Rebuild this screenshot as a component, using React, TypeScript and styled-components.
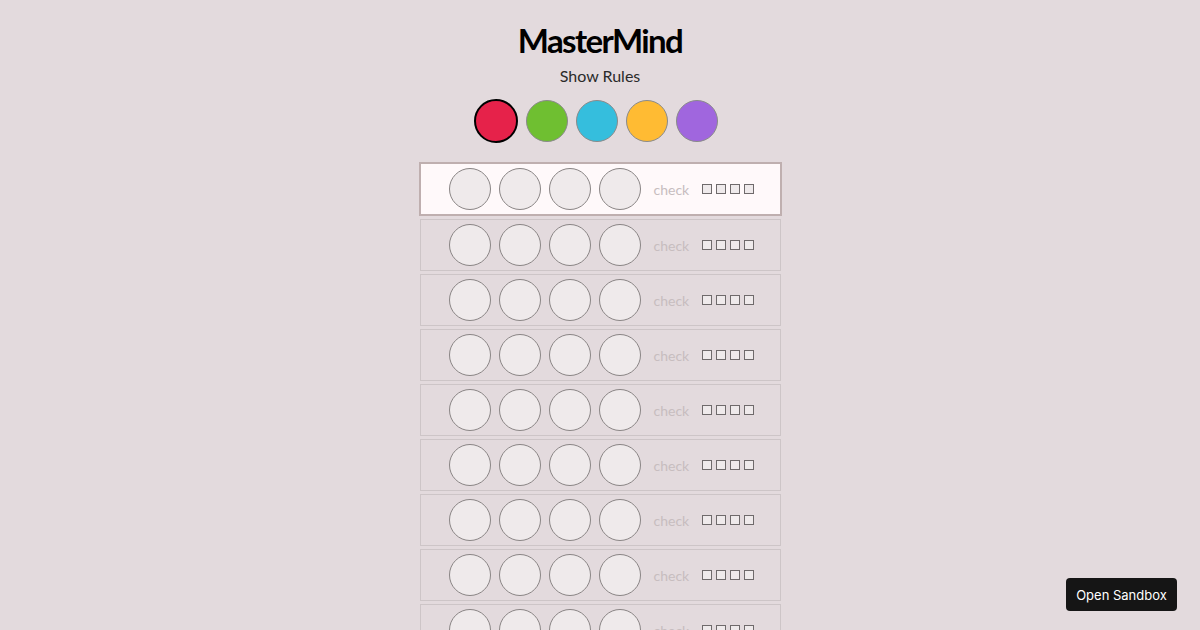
import React from "react";
import styled, { createGlobalStyle } from "styled-components";

const GlobalStyle = createGlobalStyle`
  html, body {
    margin: 0;
    padding: 0;
    background: #e3dadd;
    font-family: Lato, "Open Sans", sans-serif;
    overflow: hidden;
  }
`;

const COLORS = ["#e6224a", "#6fbf31", "#35bedd", "#ffbb33", "#a066de"];
const ROWS = 9;

const Page = styled.div`
  display: flex;
  flex-direction: column;
  align-items: center;
  padding-top: 22px;
`;

const Title = styled.h1`
  margin: 0;
  font-size: 33px;
  line-height: 36px;
  font-weight: 700;
  color: #000;
  letter-spacing: -1.6px;
`;

const RulesLink = styled.div`
  margin-top: 8px;
  font-size: 16px;
  line-height: 20px;
  color: #2a2a2a;
  cursor: pointer;
`;

const Palette = styled.div`
  display: flex;
  gap: 8px;
  margin-top: 13px;
  padding-right: 8px;
  align-items: center;
`;

const Swatch = styled.div<{ $color: string; $selected?: boolean }>`
  width: ${(p) => (p.$selected ? "44px" : "42px")};
  height: ${(p) => (p.$selected ? "44px" : "42px")};
  box-sizing: border-box;
  border-radius: 50%;
  background: ${(p) => p.$color};
  border: ${(p) => (p.$selected ? "2px solid #000" : "1px solid #8a8a8a")};
`;

const Board = styled.div`
  display: flex;
  flex-direction: column;
  align-items: center;
  gap: 3px;
  margin-top: 19px;
`;

const Row = styled.div<{ $active?: boolean }>`
  box-sizing: border-box;
  display: flex;
  align-items: center;
  width: ${(p) => (p.$active ? "363px" : "361px")};
  height: ${(p) => (p.$active ? "54px" : "52px")};
  padding-left: 28px;
  background: ${(p) => (p.$active ? "#fff9fa" : "#e3dadd")};
  border: ${(p) => (p.$active ? "2px solid #bfafaf" : "1px solid #cdc5c7")};
`;

const Pegs = styled.div`
  display: flex;
  gap: 8px;
`;

const Peg = styled.div`
  width: 42px;
  height: 42px;
  box-sizing: border-box;
  border-radius: 50%;
  background: #efeaeb;
  border: 1px solid #8a8585;
`;

const Check = styled.span`
  margin-left: 13px;
  font-size: 14px;
  color: #c7bdbf;
  cursor: default;
`;

const Hints = styled.div`
  display: flex;
  gap: 4px;
  margin-left: 13px;
`;

const Hint = styled.div`
  width: 10px;
  height: 10px;
  box-sizing: border-box;
  border: 1px solid #6f6a6b;
  background: #efeaeb;
`;

const SandboxButton = styled.button`
  position: fixed;
  right: 23px;
  bottom: 19px;
  width: 111px;
  height: 33px;
  border: none;
  border-radius: 4px;
  background: #151515;
  color: #fff;
  font-family: Inter, "Liberation Sans", sans-serif;
  font-size: 13px;
  cursor: pointer;
`;

export default function App() {
  return (
    <>
      <GlobalStyle />
      <Page>
        <Title>MasterMind</Title>
        <RulesLink>Show Rules</RulesLink>
        <Palette>
          {COLORS.map((c, i) => (
            <Swatch key={c} $color={c} $selected={i === 0} />
          ))}
        </Palette>
        <Board>
          {Array.from({ length: ROWS }).map((_, r) => (
            <Row key={r} $active={r === 0}>
              <Pegs>
                {[0, 1, 2, 3].map((p) => (
                  <Peg key={p} />
                ))}
              </Pegs>
              <Check>check</Check>
              <Hints>
                {[0, 1, 2, 3].map((h) => (
                  <Hint key={h} />
                ))}
              </Hints>
            </Row>
          ))}
        </Board>
      </Page>
      <SandboxButton>Open Sandbox</SandboxButton>
    </>
  );
}
